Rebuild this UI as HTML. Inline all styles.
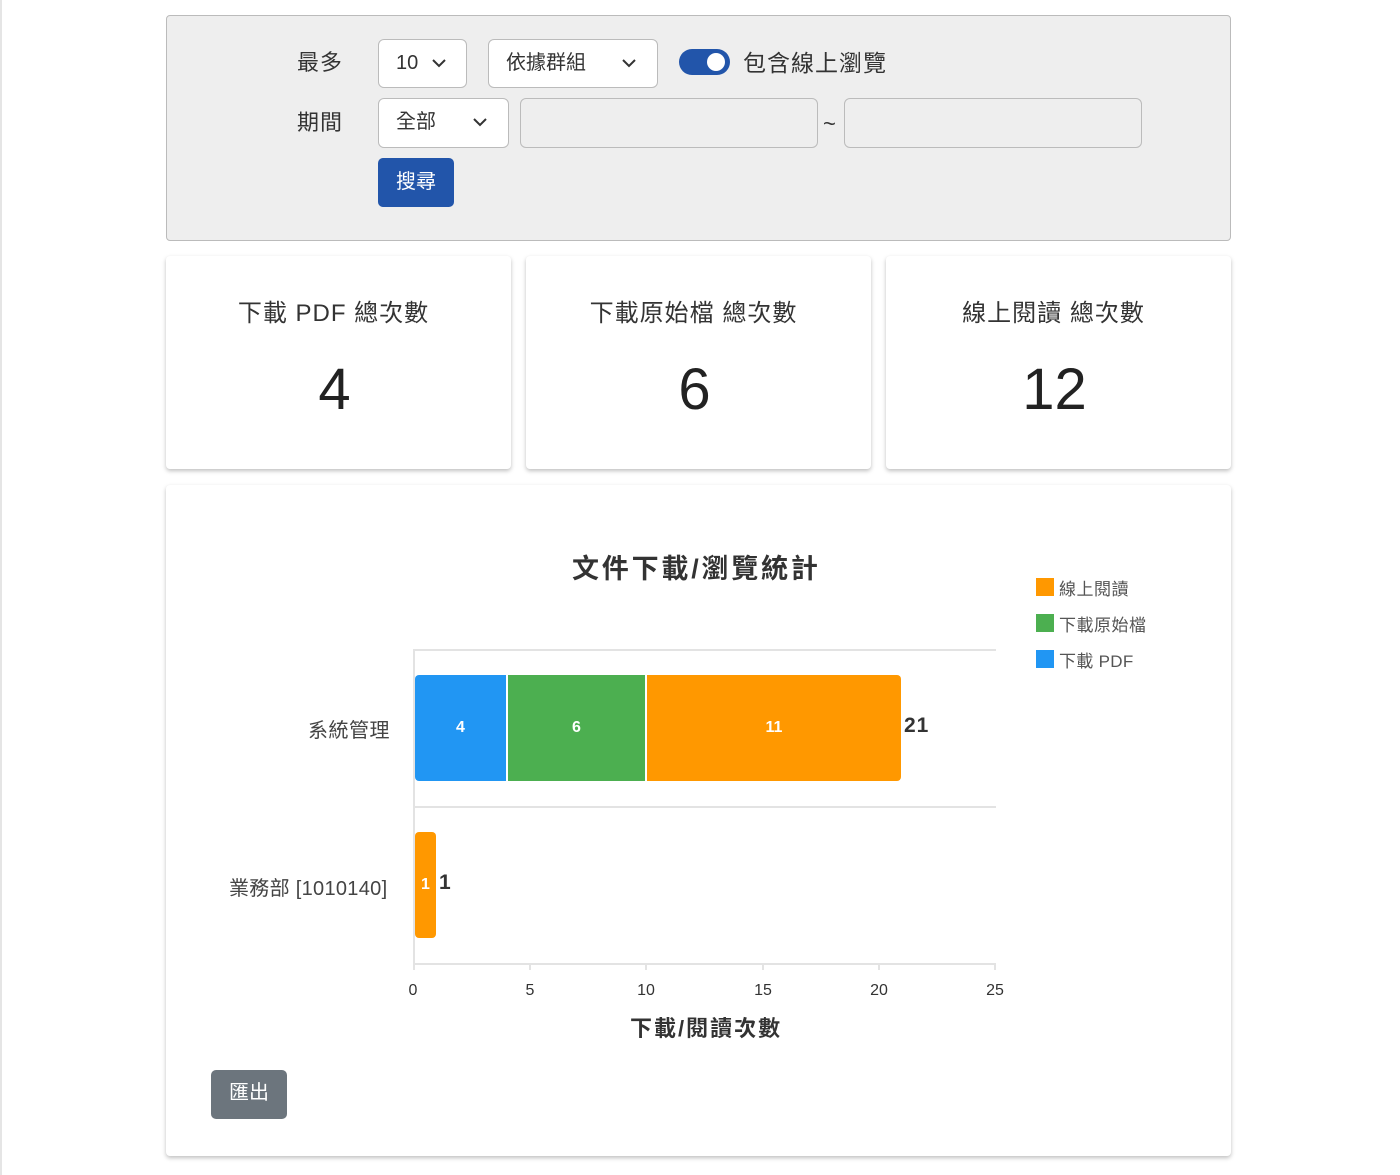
<!DOCTYPE html>
<html><head><meta charset="utf-8"><style>
*{box-sizing:border-box;margin:0;padding:0}
body{width:1400px;height:1175px;background:#fff;font-family:"Liberation Sans","Noto Sans CJK TC",sans-serif;color:#333;position:relative;overflow:hidden}
.a{position:absolute}
.lb{font-size:22px;color:#333;letter-spacing:1px}
.sel{position:absolute;background:#fff;border:1px solid #bbb;border-radius:6px;font-size:20px;color:#333;padding-left:17px;line-height:46px}
.sel svg{position:absolute;top:17px}
.inp{position:absolute;background:#eee;border:1px solid #bbb;border-radius:6px}
.card{position:absolute;background:#fff;border-radius:4px;box-shadow:0 2px 4px rgba(0,0,0,.25)}
.ct{position:absolute;left:0;right:0;top:37px;text-align:center;font-size:24px;color:#333;letter-spacing:1px;padding-right:10px}
.cn{position:absolute;left:0;right:0;top:100px;text-align:center;font-size:58px;color:#222;padding-right:8px}
.grid{position:absolute;background:#e3e3e3}
.bl{position:absolute;color:#fff;font-weight:bold;font-size:16px;display:flex;align-items:center;justify-content:center}
.tick{position:absolute;font-size:16px;color:#333;width:40px;text-align:center;top:982px}
</style></head><body>
<div class="a" style="left:0;top:0;width:2px;height:1175px;background:#e5e5e5"></div>
<div class="a" style="left:166px;top:15px;width:1065px;height:226px;background:#eee;border:1px solid #bbb;border-radius:4px"></div>
<div class="a lb" style="left:297px;top:45px">最多</div>
<div class="a lb" style="left:297px;top:105px">期間</div>
<div class="sel" style="left:378px;top:39px;width:89px;height:49px">10<svg style="left:52px" width="16" height="12" viewBox="0 0 16 12"><path d="M2 3l6 6 6-6" fill="none" stroke="#333" stroke-width="2"/></svg></div>
<div class="sel" style="left:488px;top:39px;width:170px;height:49px">依據群組<svg style="left:132px" width="16" height="12" viewBox="0 0 16 12"><path d="M2 3l6 6 6-6" fill="none" stroke="#333" stroke-width="2"/></svg></div>
<div class="a" style="left:679px;top:49px;width:51px;height:26px;background:#2255aa;border-radius:13px"><div class="a" style="right:5px;top:4px;width:18px;height:18px;border-radius:9px;background:#fff"></div></div>
<div class="a lb" style="left:743px;top:44px;font-size:23px">包含線上瀏覽</div>
<div class="sel" style="left:378px;top:98px;width:131px;height:50px">全部<svg style="left:93px" width="16" height="12" viewBox="0 0 16 12"><path d="M2 3l6 6 6-6" fill="none" stroke="#333" stroke-width="2"/></svg></div>
<div class="inp" style="left:520px;top:98px;width:298px;height:50px"></div>
<div class="a" style="left:823px;top:111px;font-size:22px">~</div>
<div class="inp" style="left:844px;top:98px;width:298px;height:50px"></div>
<div class="a" style="left:378px;top:158px;width:76px;height:49px;background:#2255aa;border-radius:5px;color:#fff;font-size:20px;text-align:center;line-height:49px">搜尋</div>

<div class="card" style="left:166px;top:256px;width:345px;height:213px"><div class="ct">下載 PDF 總次數</div><div class="cn">4</div></div>
<div class="card" style="left:526px;top:256px;width:345px;height:213px"><div class="ct">下載原始檔 總次數</div><div class="cn">6</div></div>
<div class="card" style="left:886px;top:256px;width:345px;height:213px"><div class="ct">線上閱讀 總次數</div><div class="cn">12</div></div>

<div class="card" style="left:166px;top:485px;width:1065px;height:671px"></div>
<div class="a" style="left:572px;top:547px;font-size:27px;font-weight:bold;color:#333;letter-spacing:2.8px">文件下載/瀏覽統計</div>
<div class="a" style="left:1036px;top:578px;width:18px;height:18px;background:#ff9800"></div><div class="a" style="left:1059px;top:575px;font-size:17px;color:#555;letter-spacing:.5px">線上閱讀</div>
<div class="a" style="left:1036px;top:614px;width:18px;height:18px;background:#4caf50"></div><div class="a" style="left:1059px;top:611px;font-size:17px;color:#555;letter-spacing:.5px">下載原始檔</div>
<div class="a" style="left:1036px;top:650px;width:18px;height:18px;background:#2196f3"></div><div class="a" style="left:1059px;top:647px;font-size:17px;color:#555;letter-spacing:.3px">下載 PDF</div>

<div class="grid" style="left:413px;top:649px;width:583px;height:2px"></div>
<div class="grid" style="left:413px;top:806px;width:583px;height:2px"></div>
<div class="grid" style="left:413px;top:963px;width:583px;height:2px"></div>
<div class="grid" style="left:413px;top:650px;width:2px;height:320px"></div>
<div class="grid" style="left:529px;top:963px;width:2px;height:7px"></div>
<div class="grid" style="left:645px;top:963px;width:2px;height:7px"></div>
<div class="grid" style="left:762px;top:963px;width:2px;height:7px"></div>
<div class="grid" style="left:878px;top:963px;width:2px;height:7px"></div>
<div class="grid" style="left:994px;top:963px;width:2px;height:7px"></div>

<div class="bl" style="left:415px;top:675px;width:91px;height:106px;background:#2196f3;border-radius:4px 0 0 4px">4</div>
<div class="bl" style="left:508px;top:675px;width:137px;height:106px;background:#4caf50">6</div>
<div class="bl" style="left:647px;top:675px;width:254px;height:106px;background:#ff9800;border-radius:0 4px 4px 0">11</div>
<div class="a" style="left:904px;top:714px;font-size:21px;font-weight:bold;color:#333;letter-spacing:1px">21</div>
<div class="bl" style="left:415px;top:832px;width:21px;height:106px;background:#ff9800;border-radius:4px">1</div>
<div class="a" style="left:439px;top:871px;font-size:21px;font-weight:bold;color:#333">1</div>
<div class="a" style="left:308px;top:714px;font-size:20px;color:#444;letter-spacing:.5px">系統管理</div>
<div class="a" style="left:229px;top:872px;font-size:20px;color:#444;letter-spacing:.3px">業務部 [1010140]</div>
<div class="tick" style="left:393px">0</div><div class="tick" style="left:510px">5</div><div class="tick" style="left:626px">10</div><div class="tick" style="left:743px">15</div><div class="tick" style="left:859px">20</div><div class="tick" style="left:975px">25</div>
<div class="a" style="left:630px;top:1011px;font-size:22px;font-weight:bold;color:#333;letter-spacing:2px">下載/閱讀次數</div>
<div class="a" style="left:211px;top:1070px;width:76px;height:49px;background:#6c757d;border-radius:5px;color:#fff;font-size:20px;text-align:center;line-height:47px">匯出</div>
</body></html>
